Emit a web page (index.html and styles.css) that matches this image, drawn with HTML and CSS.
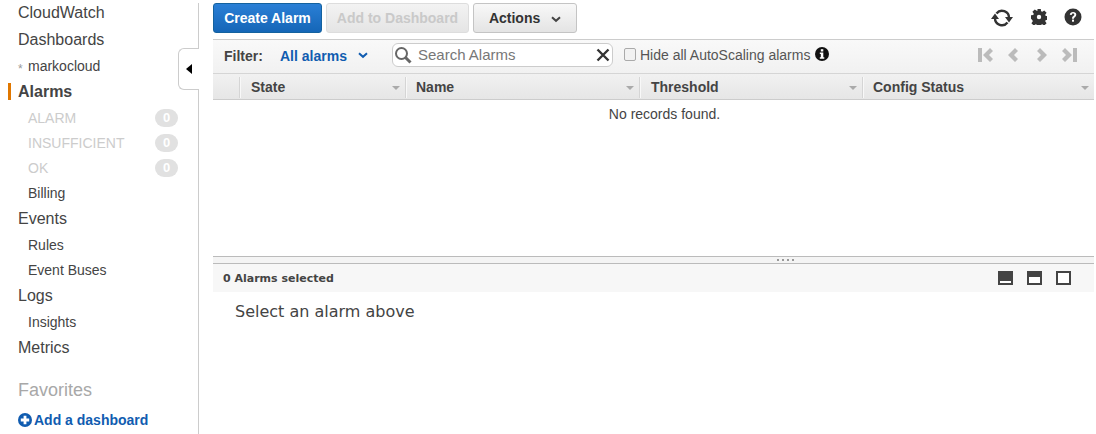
FILE: index.html
```html
<!DOCTYPE html>
<html lang="en">
<head>
    <meta charset="UTF-8">
    <title>CloudWatch Alarms</title>
    <link rel="stylesheet" href="styles.css">
</head>
<body>
    <nav class="sidebar">
        <ul class="nav-list">
            <li class="nav-item nav-first">CloudWatch</li>
            <li class="nav-item nav-gap">Dashboards</li>
            <li class="nav-sub nav-gap"><span class="star">*</span>markocloud</li>
            <li class="nav-item nav-active">Alarms</li>
            <li class="nav-sub nav-muted nav-gap">ALARM<span class="count">0</span></li>
            <li class="nav-sub nav-muted">INSUFFICIENT<span class="count">0</span></li>
            <li class="nav-sub nav-muted">OK<span class="count">0</span></li>
            <li class="nav-sub">Billing</li>
            <li class="nav-item">Events</li>
            <li class="nav-sub nav-gap">Rules</li>
            <li class="nav-sub">Event Buses</li>
            <li class="nav-item">Logs</li>
            <li class="nav-sub nav-gap">Insights</li>
            <li class="nav-item">Metrics</li>
            <li class="nav-fav">Favorites</li>
            <li class="nav-add">
                <svg class="add-icon" viewBox="0 0 14 14"><circle cx="7" cy="7" r="7" fill="#105cb0"/><path d="M5.600 2.800h2.800v2.800h2.800v2.800H8.400v2.800H5.600V8.400H2.800V5.600h2.800z" fill="#fff"/></svg>
                Add a dashboard
            </li>
        </ul>
        <div class="collapse-tab"><span class="collapse-arrow"></span></div>
    </nav>

    <main class="main">
        <div class="toolbar">
            <button class="btn btn-primary">Create Alarm</button>
            <button class="btn btn-disabled">Add to Dashboard</button>
            <button class="btn btn-actions">Actions
                <svg class="chev" viewBox="0 0 10 7"><path d="M1 1.200l4 3.600 4-3.600" fill="none" stroke="#444" stroke-width="2"/></svg>
            </button>
            <div class="tool-icons">
                <svg class="tool-icon" viewBox="0 0 22 20"><path d="M5.500 5.500A7 7 0 0 1 18 10M4 10a7 7 0 0 0 12.500 4.500" fill="none" stroke="#333" stroke-width="2.400"/><path d="M0 11h8L4 5.500zM14 9h8l-4 5.500z" fill="#333"/></svg>
                <svg class="tool-icon gear" viewBox="0 0 16 16"><path d="M6.200 0h3.600l.3 2.300 1.200.5 1.900-1.400 2.400 2.400-1.400 1.900.5 1.200 2.300.3v3.600l-2.300.3-.5 1.200 1.400 1.900-2.400 2.400-1.900-1.400-1.200.5-.3 2.300H6.200l-.3-2.300-1.200-.5-1.900 1.400-2.400-2.400 1.400-1.900-.5-1.200L0 9.800V6.200l2.300-.3.500-1.200-1.400-1.900 2.400-2.400 1.900 1.400 1.200-.5z" fill="#333"/><circle cx="8" cy="8" r="2.200" fill="#fff"/></svg>
                <svg class="tool-icon help" viewBox="0 0 18 18"><circle cx="9" cy="9" r="8.500" fill="#333"/><path d="M5.800 6.800C6 4.900 7.300 4 9.100 4c1.900 0 3.200 1.100 3.200 2.700 0 2.300-2.400 2.300-2.400 4H8c0-2.800 2.300-2.800 2.300-4 0-.7-.5-1.100-1.200-1.100-.8 0-1.300.5-1.400 1.300z" fill="#fff"/><rect x="8" y="11.600" width="2" height="2.100" fill="#fff"/></svg>
            </div>
        </div>

        <div class="filter-bar">
            <span class="filter-label">Filter:</span>
            <span class="filter-value">All alarms</span>
            <svg class="filter-chev" viewBox="0 0 10 7"><path d="M1 1.200l4 3.600 4-3.600" fill="none" stroke="#105cb0" stroke-width="2"/></svg>
            <div class="search">
                <svg class="search-icon" viewBox="0 0 18 18"><circle cx="7.500" cy="7.500" r="5.500" fill="none" stroke="#666" stroke-width="2"/><path d="M11.500 11.500l5 5" stroke="#666" stroke-width="3"/></svg>
                <span class="search-text">Search Alarms</span>
                <svg class="search-clear" viewBox="0 0 14 14"><path d="M1.500 1.500l11 11M12.500 1.500l-11 11" stroke="#333" stroke-width="2.400"/></svg>
            </div>
            <span class="check"></span>
            <span class="check-label">Hide all AutoScaling alarms</span>
            <svg class="info" viewBox="0 0 14 14"><circle cx="7" cy="7" r="7" fill="#111"/><rect x="5.800" y="2.200" width="2.500" height="2.300" fill="#fff"/><path d="M4.800 5.600h3.500v4.600h1v1.500H4.800v-1.500h1V7.100h-1z" fill="#fff"/></svg>
            <div class="pager">
                <svg class="pager-icon" viewBox="0 0 17 16"><rect x="1" y="1" width="4" height="14" fill="#bbb"/><path d="M13 1l3 3-4 4 4 4-3 3-7-7z" fill="#bbb"/></svg>
                <svg class="pager-icon" viewBox="0 0 17 16"><path d="M10 1l3 3-4 4 4 4-3 3-7-7z" fill="#bbb"/></svg>
                <svg class="pager-icon" viewBox="0 0 17 16"><path d="M7 1L4 4l4 4-4 4 3 3 7-7z" fill="#bbb"/></svg>
                <svg class="pager-icon" viewBox="0 0 17 16"><path d="M4 1L1 4l4 4-4 4 3 3 7-7z" fill="#bbb"/><rect x="12" y="1" width="4" height="14" fill="#bbb"/></svg>
            </div>
        </div>

        <div class="table-head">
            <div class="col"></div>
            <div class="col">State</div>
            <div class="col">Name</div>
            <div class="col">Threshold</div>
            <div class="col">Config Status</div>
        </div>
        <div class="records">No records found.</div>

        <div class="splitter"><span class="grip"></span><span class="grip"></span><span class="grip"></span><span class="grip"></span></div>
        <div class="selected-bar">
            <span class="selected-text">0 Alarms selected</span>
            <div class="panel-icons">
                <span class="panel-icon panel-small"></span>
                <span class="panel-icon panel-mid"></span>
                <span class="panel-icon panel-full"></span>
            </div>
        </div>
        <div class="detail">Select an alarm above</div>
    </main>
</body>
</html>
```

FILE: styles.css
```css
html, body {
    height: 100%;
}
body {
    font-family: "Liberation Sans", Arial, sans-serif;
    margin: 0;
    padding: 0;
    display: flex;
    overflow: hidden;
    color: #444;
    background-color: #fff;
}

/* sidebar */
.sidebar {
    position: relative;
    flex: 0 0 199px;
    box-sizing: border-box;
    height: 431px;
    margin-top: 3px;
    border-right: 1px solid #ccc;
}
.nav-list {
    list-style: none;
    margin: -2px 0 0;
    padding: 0;
}
.nav-item {
    height: 25px;
    line-height: 25px;
    padding-left: 18px;
    font-size: 16px;
}
.nav-first {
    height: 24px;
    line-height: 24px;
}
.nav-sub {
    height: 25px;
    line-height: 25px;
    padding-left: 28px;
    font-size: 14px;
    position: relative;
}
.nav-gap {
    margin-top: 2px;
}
.nav-active {
    font-weight: bold;
    position: relative;
}
.nav-active::before {
    content: "";
    position: absolute;
    left: 8px;
    top: 4px;
    width: 3px;
    height: 17px;
    background-color: #e07700;
}
.nav-muted {
    color: #ccc;
}
.star {
    position: absolute;
    left: 18px;
    top: 3px;
    font-size: 12px;
    color: #999;
}
.count {
    position: absolute;
    left: 155px;
    top: 3px;
    width: 23px;
    height: 18px;
    line-height: 17px;
    border-radius: 9px;
    background-color: #e1e1e1;
    color: #fff;
    font-size: 13px;
    font-weight: bold;
    text-align: center;
}
.nav-fav {
    height: 25px;
    line-height: 25px;
    margin-top: 18px;
    padding-left: 18px;
    font-size: 18px;
    color: #a8a8a8;
}
.nav-add {
    display: flex;
    align-items: center;
    gap: 2px;
    height: 20px;
    margin-top: 7px;
    padding-left: 18px;
    font-size: 14px;
    font-weight: bold;
    color: #105cb0;
}
.add-icon {
    width: 14px;
    height: 14px;
}
.collapse-tab {
    position: absolute;
    left: 178px;
    top: 45px;
    width: 21px;
    height: 42px;
    box-sizing: border-box;
    border: 1px solid #ccc;
    border-right: 0;
    border-radius: 6px 0 0 6px;
    background-color: #fff;
}
.collapse-arrow {
    position: absolute;
    left: 7px;
    top: 15px;
    border-top: 5px solid transparent;
    border-bottom: 5px solid transparent;
    border-right: 6px solid #000;
}

/* main area */
.main {
    flex: 1;
    display: flex;
    flex-direction: column;
    min-width: 0;
    padding: 3px 2px 0 14px;
}
.toolbar {
    display: flex;
    align-items: stretch;
    gap: 4px;
    height: 30px;
    margin-bottom: 6px;
}
.btn {
    box-sizing: border-box;
    height: 30px;
    padding: 0;
    border-radius: 3px;
    font-family: inherit;
    font-size: 14px;
    font-weight: bold;
}
.btn-primary {
    width: 109px;
    border: 1px solid #14629f;
    background: linear-gradient(#2a7fd6, #1566b7);
    color: #fff;
}
.btn-disabled {
    width: 143px;
    border: 1px solid #ddd;
    background: linear-gradient(#f3f3f3, #e5e5e5);
    color: #c9c9c9;
}
.btn-actions {
    width: 104px;
    border: 1px solid #c4c4c4;
    background: linear-gradient(#f8f8f8, #e4e4e4);
    color: #333;
}
.chev {
    width: 10px;
    height: 7px;
    margin-left: 7px;
}
.tool-icons {
    margin-left: auto;
    display: flex;
    align-items: center;
}
.tool-icon {
    display: block;
    width: 22px;
    height: 20px;
    margin: 0 16px 0 0;
}
.tool-icon.gear {
    width: 16px;
    height: 16px;
    margin: 0 17px 2px 2px;
}
.tool-icon.help {
    width: 18px;
    height: 18px;
    margin: 0 12px 2px 0;
}

.filter-bar {
    display: flex;
    align-items: center;
    box-sizing: border-box;
    height: 35px;
    padding: 0 0 2px 11px;
    border-top: 1px solid #ccc;
    border-bottom: 1px solid #d5d5d5;
    background: linear-gradient(#f9f9f9, #f1f1f1);
    font-size: 14px;
}
.filter-label {
    width: 56px;
    font-weight: bold;
}
.filter-value {
    width: 78px;
    font-weight: bold;
    color: #105cb0;
}
.filter-chev {
    width: 10px;
    height: 7px;
    margin-right: 24px;
}
.search {
    display: flex;
    align-items: center;
    box-sizing: border-box;
    width: 221px;
    height: 24px;
    margin-top: -2px;
    border: 1px solid #ccc;
    border-radius: 6px;
    background-color: #fff;
}
.search-icon {
    width: 18px;
    height: 18px;
    margin: 0 6px 0 1px;
}
.search-text {
    flex: 1;
    color: #777;
    font-size: 15px;
}
.search-clear {
    width: 14px;
    height: 14px;
    margin-right: 2px;
}
.check {
    box-sizing: border-box;
    width: 12px;
    height: 13px;
    margin: -2px 4px 0 11px;
    border: 1px solid #aaa;
    border-radius: 2px;
    background-color: #f2f2f2;
}
.check-label {
    margin-top: -2px;
    color: #555;
}
.info {
    width: 14px;
    height: 14px;
    margin: -4px 0 0 5px;
}
.pager {
    margin: -2px 16px 0 auto;
    display: flex;
    gap: 11px;
}
.pager-icon {
    display: block;
    width: 17px;
    height: 16px;
}

.table-head {
    display: grid;
    grid-template-columns: 26px 166px 234px 223px 1fr;
    box-sizing: border-box;
    height: 26px;
    border-bottom: 1px solid #ccc;
    background: linear-gradient(#f1f1f1, #e6e6e6);
    font-size: 14px;
    font-weight: bold;
    color: #444;
}
.col {
    position: relative;
    margin: 3px 0 2px;
    padding-left: 10px;
    line-height: 21px;
    border-left: 1px solid #d5d5d5;
    box-shadow: inset 1px 0 0 #f8f8f8;
}
.col:nth-child(even) {
    padding-left: 11px;
}
.col:first-child {
    border-left: 0;
    box-shadow: none;
}
.col:not(:first-child)::after {
    content: "";
    position: absolute;
    right: 5px;
    top: 9px;
    border-left: 4px solid transparent;
    border-right: 4px solid transparent;
    border-top: 4px solid #aaa;
}
.records {
    flex: 0 0 156px;
    padding: 6px 0 0 22px;
    box-sizing: border-box;
    text-align: center;
    font-size: 14px;
    color: #444;
}
.splitter {
    display: flex;
    gap: 3px;
    box-sizing: border-box;
    height: 8px;
    padding: 2px 0 0 564px;
    border-top: 1px solid #bbb;
    border-bottom: 1px solid #bbb;
    background-color: #f4f4f4;
}
.grip {
    width: 2px;
    height: 2px;
    background-color: #999;
}
.selected-bar {
    display: flex;
    align-items: center;
    justify-content: space-between;
    height: 28px;
    padding-left: 10px;
    background-color: #f7f7f7;
}
.selected-text {
    font-family: "DejaVu Sans", Verdana, sans-serif;
    font-size: 11px;
    font-weight: bold;
    color: #444;
}
.panel-icons {
    display: flex;
    gap: 14px;
    margin-right: 23px;
}
.panel-icon {
    box-sizing: border-box;
    width: 15px;
    height: 14px;
    border: 2px solid #444;
    background-color: #fff;
}
.panel-small {
    border-top-width: 10px;
}
.panel-mid {
    border-top-width: 6px;
}
.detail {
    padding: 10px 0 0 22px;
    font-family: "DejaVu Sans", Verdana, sans-serif;
    font-size: 16px;
    color: #444;
}
```
